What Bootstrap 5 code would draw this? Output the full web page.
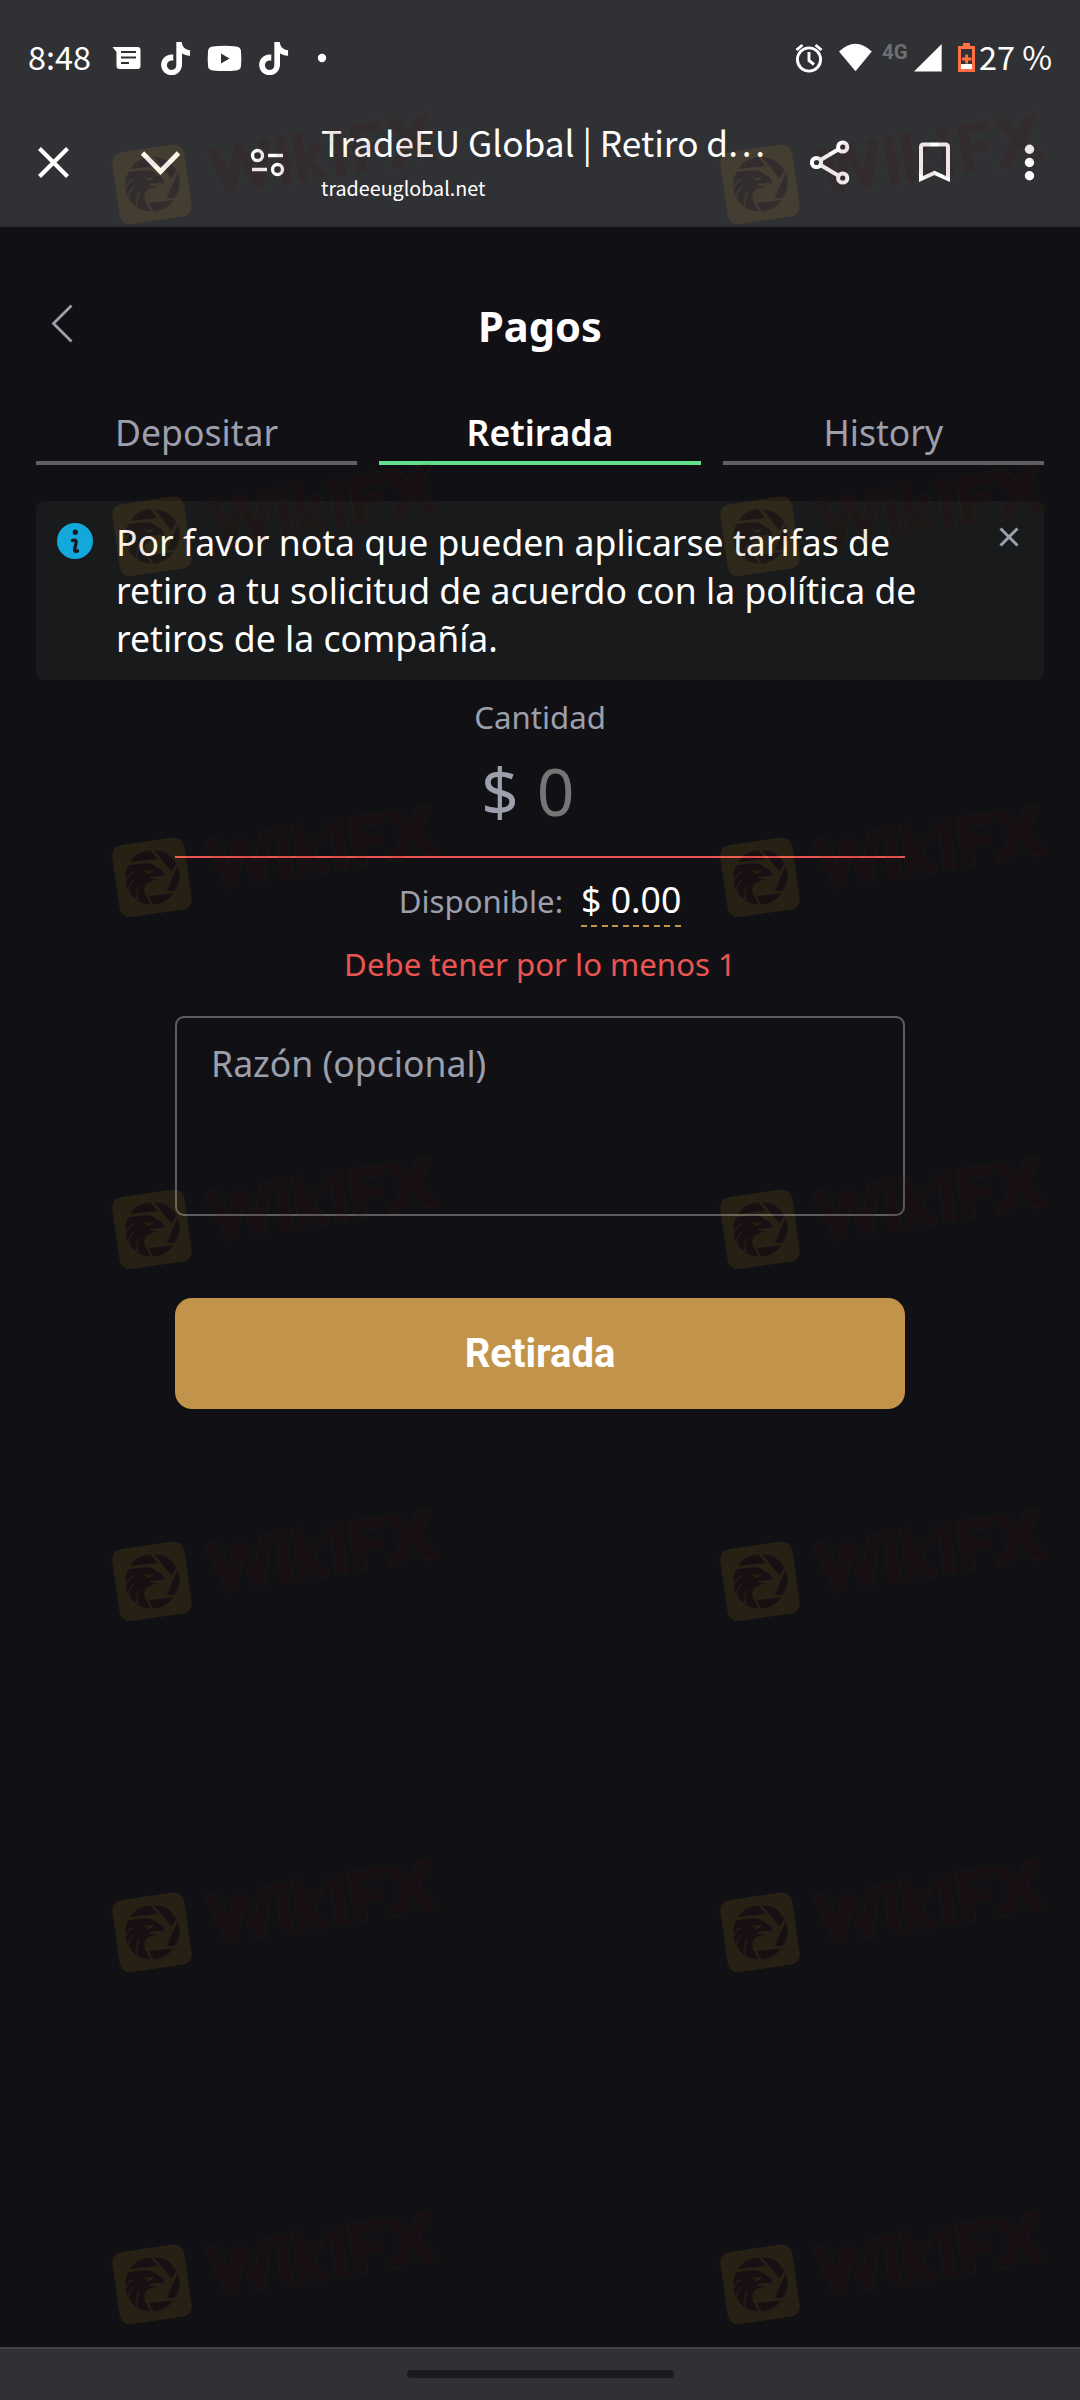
<!DOCTYPE html>
<html lang="es">
<head>
<meta charset="utf-8">
<meta name="viewport" content="width=device-width, initial-scale=1">
<title>TradeEU Global | Retiro de fondos</title>
<link href="https://cdn.jsdelivr.net/npm/bootstrap@5.3.0/dist/css/bootstrap.min.css" rel="stylesheet">
<style>
  body { background: #111115; color: #fff; font-family: "Noto Sans", sans-serif; font-size: 35.6px; line-height: 48px; width: 1080px; height: 2400px; overflow: hidden; }
  svg { display: block; flex: none; }
  .sys-font { font-family: "Noto Sans CJK JP", "Noto Sans", sans-serif; }
  .chrome-head { background: #303134; height: 227px; border-bottom: 2px solid #2d2e32; }
  .status-row { height: 100px; padding: 16px 29px 0 28px; }
  .clock-text { width: 82px; font-size: 32.4px; line-height: 40px; padding-bottom: 5px; }
  .net-text { font: 700 20.5px/24px Roboto, sans-serif; color: #6e6f71; width: 31px; padding-bottom: 12px; }
  .pct-text { font-size: 32.4px; line-height: 40px; width: 72px; padding-bottom: 5px; }
  .tool-row { height: 125px; padding: 0 24px 0 28px; }
  .page-title { width: 460px; margin-left: 31px; margin-top: -3px; }
  .title-line { font-size: 35.2px; line-height: 44px; }
  .title-line span { letter-spacing: 3.8px; }
  .url-line { font-size: 19.7px; line-height: 30px; margin-top: 9px; }
  .muted-text { color: #9c9fac; }
  .head-row { padding-top: 69px; height: 173px; }
  .back-btn { margin-left: 49px; width: 30px; margin-top: 5px; }
  .head-row h1 { font-size: 41.6px; line-height: 60px; font-weight: 700; }
  .pay-tabs { gap: 22px; padding: 0 36px; }
  .pay-tabs .nav-link { padding: 8px 0 5px; border-radius: 0; border-bottom: 4px solid #5f5f63; color: #9c9fac; line-height: 48px; }
  .pay-tabs .nav-link.active { background: none; border-bottom-color: #62e08c; color: #fff; font-weight: 600; }
  .note-box { margin: 36px 36px 0; height: 179px; border-radius: 8px; background: #191a1b; border: 0; padding: 18px 25px 0 20px; color: #fff; }
  .note-copy { margin-left: 22px; margin-top: -1px; }
  .pay-form { width: 730px; }
  .f32 { font-size: 31.2px; line-height: 44px; }
  .amount-row { height: 119px; padding-top: 6px; border-bottom: 2px solid #eb5551; padding-left: 306px; font-size: 66px; line-height: 90px; }
  .amount-row .zero-text { color: #757575; margin-left: 18px; }
  .avail-sum { background: repeating-linear-gradient(90deg, #c4954a 0 6px, transparent 6px 10.4px) bottom / 100% 2px no-repeat; line-height: 52px; padding-bottom: 2px; }
  .err-text { color: #eb5551; }
  .reason-box { height: 200px; background: transparent !important; border: 2px solid #5d5d60; border-radius: 9px; padding: 21px 34px; font-size: 35.6px; line-height: 48px; resize: none; color: #fff; }
  .reason-box::placeholder { color: #9c9fac; opacity: 1; }
  .btn-gold { height: 111px; border: 0; border-radius: 17px; background: #c2934a; color: #fff; font: 700 40px/48px Roboto, sans-serif; }
  .gesture-bar { height: 53px; background: #303134; border-top: 2px solid #424248; }
  .gesture-pill { width: 267px; height: 8px; border-radius: 4px; background: #1b1b1d; margin-top: 21px; }
  .wm-layer { position: absolute; left: 0; top: 0; pointer-events: none; }
</style>
</head>
<body class="d-flex flex-column position-relative">

<header class="chrome-head sys-font">
  <div class="status-row d-flex align-items-center">
    <span class="clock-text">8:48</span>
    <svg width="34" height="34" viewBox="110 41 34 34"><path fill="#fff" fill-rule="evenodd" d="M112.5 47h25a3 3 0 0 1 3 3v16a3 3 0 0 1-3 3h-18a3 3 0 0 1-3-3V52zM121 51v2h15v-2zM121 56.5v2h15v-2zM121 62v2h8v-2z"/></svg>
    <svg style="margin-left:14px" width="34" height="34" viewBox="158 41 34 34"><g id="tk" transform="translate(159,42) scale(1.385)"><path fill="#fff" d="M12.525.02c1.31-.02 2.61-.01 3.91-.02.08 1.53.63 3.09 1.75 4.17 1.12 1.11 2.7 1.62 4.24 1.79v4.03c-1.44-.05-2.89-.35-4.2-.97-.57-.26-1.1-.59-1.62-.93-.01 2.92.01 5.84-.02 8.75-.08 1.4-.54 2.79-1.35 3.94-1.31 1.92-3.58 3.17-5.91 3.21-1.43.08-2.86-.31-4.08-1.03-2.02-1.19-3.44-3.37-3.65-5.71-.02-.5-.03-1-.01-1.49.18-1.9 1.12-3.72 2.58-4.96 1.66-1.44 3.98-2.13 6.15-1.72.02 1.48-.04 2.96-.04 4.44-.99-.32-2.15-.23-3.02.37-.63.41-1.11 1.04-1.36 1.75-.21.51-.15 1.07-.14 1.61.24 1.64 1.82 3.02 3.5 2.87 1.12-.01 2.19-.66 2.77-1.61.19-.33.4-.67.41-1.06.1-1.79.06-3.57.07-5.36.01-4.03-.01-8.05.02-12.07z"/></g></svg>
    <svg style="margin-left:15px" width="36" height="34" viewBox="207 41 36 34"><path fill="#fff" fill-rule="evenodd" d="M213 46.500q11.500-1.500 23 0 5 .5 5 5 .6 7 0 14 0 4.500-5 5-11.500 1-23 0-5-.5-5-5-.6-7 0-14 0-4.500 5-5zM221 53.500v10l8.500-5z"/></svg>
    <svg style="margin-left:13px" width="34" height="34" viewBox="158 41 34 34"><use href="#tk"/></svg>
    <svg style="margin-left:26px" width="12" height="34" viewBox="316 41 12 34"><circle cx="322" cy="58" r="4.200" fill="#fff"/></svg>
    <div class="d-flex align-items-center ms-auto">
      <svg width="34" height="34" viewBox="792 41 34 34" fill="none" stroke="#fff"><circle cx="809" cy="59.500" r="11.600" stroke-width="2.900"/><path stroke-width="2.900" d="M809 52v8.500l5 4M796.500 50l6-5M821.500 50l-6-5"/></svg>
      <svg class="ms-2" width="40" height="34" viewBox="834 41 40 34"><path fill="#fff" d="M839 51.600Q855.500 36 871.800 51.600L855.500 71.200z"/></svg>
      <span class="net-text ms-2">4G</span>
      <svg width="30" height="34" viewBox="913 41 30 34"><path fill="#fff" d="M914 71.500L941.700 44v27.500z"/></svg>
      <svg style="margin-left:13px" width="23" height="34" viewBox="956 41 23 34"><path fill="#ff7043" fill-rule="evenodd" d="M963 43h7v3h5v26h-17V46h5zM961 49v15h11V49z"/><path fill="#fff" d="M961 64h11v5h-11z"/><path stroke="#ff7043" stroke-width="2.800" d="M962 59h9.500M966.700 54.500v9"/></svg>
      <span class="pct-text text-nowrap">27 %</span>
    </div>
  </div>
  <div class="tool-row d-flex align-items-center">
    <svg width="50" height="49" viewBox="28 138 50 49" fill="none" stroke="#fff" stroke-width="4.200"><path d="M39.500 148.500l28 28M67.500 148.500l-28 28"/></svg>
    <svg style="margin-left:57px" width="50" height="49" viewBox="135 138 50 49" fill="none" stroke="#fff" stroke-width="4.800"><path d="M142.500 153l18 18.500 18-18.500"/></svg>
    <svg style="margin-left:57px" width="48" height="49" viewBox="242 138 48 49" fill="none" stroke="#fff" stroke-width="3.300"><circle cx="257.500" cy="155.500" r="5"/><circle cx="277.500" cy="169.500" r="5"/><path d="M268 155.500h15M252 169.500h15"/></svg>
    <div class="page-title">
      <div class="title-line text-nowrap">TradeEU Global | Retiro d<span>...</span></div>
      <div class="url-line">tradeeuglobal.net</div>
    </div>
    <svg style="margin-left:23px" width="52" height="49" viewBox="804 138 52 49" fill="none" stroke="#fff" stroke-width="4"><circle cx="842.700" cy="147" r="4.600"/><circle cx="842.700" cy="178" r="4.600"/><circle cx="816.500" cy="162.500" r="4.600"/><path d="M820.500 160l18.500-11M820.500 165l18.500 11"/></svg>
    <svg style="margin-left:52px" width="52" height="49" viewBox="908 138 52 49" fill="none" stroke="#fff" stroke-width="4"><path d="M921 179V147q0-2.500 2.500-2.500h22q2.500 0 2.500 2.500v32l-13.500-6z"/></svg>
    <svg class="ms-auto" width="52" height="49" viewBox="1004 138 52 49" fill="#fff"><circle cx="1029.500" cy="149.300" r="4.700"/><circle cx="1029.500" cy="162.500" r="4.700"/><circle cx="1029.500" cy="175.700" r="4.700"/></svg>
  </div>
</header>

<main class="flex-grow-1">
  <div class="head-row d-flex">
    <a class="back-btn" href="#" aria-label="Volver"><svg width="30" height="44" viewBox="50 300 30 44" fill="none" stroke="#9c9fac" stroke-width="2.800"><path d="M72.500 304.500L54.500 322.500 72.500 340.500"/></svg></a>
    <h1 class="flex-grow-1 text-center mb-0" style="margin-right:79px">Pagos</h1>
  </div>
  <nav class="pay-tabs nav nav-pills nav-justified flex-nowrap">
    <a class="nav-link col" href="#">Depositar</a>
    <a class="nav-link col active" href="#">Retirada</a>
    <a class="nav-link col" href="#">History</a>
  </nav>
  <div class="note-box alert d-flex mb-0">
    <svg width="38" height="44" viewBox="56 519 38 44"><circle cx="75" cy="541" r="18" fill="#12a8dc"/><circle cx="75.300" cy="532.200" r="2.600" fill="#17191b"/><path fill="none" stroke="#17191b" stroke-width="3.400" stroke-linecap="round" d="M72.500 540.500q4.500-1.500 3.500 3l-1.200 5q-.8 4 2.700 2.500"/></svg>
    <div class="note-copy flex-grow-1">Por favor nota que pueden aplicarse tarifas de<br>retiro a tu solicitud de acuerdo con la política de<br>retiros de la compañía.</div>
    <svg width="20" height="36" viewBox="999 519 20 36" stroke="#9c9fac" stroke-width="3"><path d="M1000.500 528.500l17 17M1017.500 528.500l-17 17"/></svg>
  </div>
  <form class="pay-form mx-auto">
    <div class="f32 muted-text text-center" style="padding-top:15px">Cantidad</div>
    <div class="amount-row d-flex muted-text mb-0"><span>$</span><span class="zero-text">0</span></div>
    <div class="d-flex justify-content-center align-items-baseline" style="padding-top:15px">
      <span class="f32 muted-text">Disponible:</span><span class="avail-sum" style="margin-left:18px">$ 0.00</span>
    </div>
    <div class="err-text f32 text-center" style="margin-top:15px">Debe tener por lo menos 1</div>
    <textarea class="form-control reason-box" style="margin-top:30px" placeholder="Razón (opcional)"></textarea>
    <button type="button" class="btn btn-gold w-100 d-block" style="margin-top:82px">Retirada</button>
  </form>
</main>

<footer class="gesture-bar d-flex justify-content-center"><div class="gesture-pill"></div></footer>

<svg class="wm-layer" width="1080" height="2400" viewBox="0 0 1080 2400" aria-hidden="true">
  <defs>
    <g id="word">
      <g transform="translate(341,334) rotate(-9.200)" font-family="Lato, sans-serif" font-weight="400" font-size="185" stroke-linejoin="round" stroke-linecap="round"><text x="6" y="0" textLength="184" lengthAdjust="spacingAndGlyphs">W</text><text x="203" y="0">i</text><text x="257" y="0" textLength="84" lengthAdjust="spacingAndGlyphs">k</text><text x="368" y="0">i</text><text x="424" y="0">F</text><text x="548" y="0" textLength="128" lengthAdjust="spacingAndGlyphs">X</text></g>
    </g>
    <g id="wm" opacity=".1">
      <rect x="48" y="195" width="218" height="218" rx="30" fill="#f4b91f" transform="rotate(-8.200 157 304)"/>
      <g fill="#500800">
        <path d="M91 258A82 82 0 0 1 152 222L174 249z"/>
        <path d="M163 222A82 82 0 0 1 230 262L216 287z"/>
        <path d="M234 269A82 82 0 0 1 226 344L201 346z"/>
        <path d="M222 351A82 82 0 0 1 161 386L147 361z"/>
        <path d="M86 268L130 262Q163 260 173 277Q192 279 193 304L186 299L150 302Q147 311 181 310Q151 313 139 325Q127 340 140 362L154 386Q133 384 118 377A82 82 0 0 1 86 268z"/>
      </g>
      <path fill="none" stroke="#f4b91f" stroke-width="4" d="M134 283q13 7 24 1q-7 12-17 5M76 317q10-24 27-28M86 345q4-25 17-33M113 376q-5-28 6-48"/>
      <use href="#word" fill="#5a5a00" stroke="#5a5a00" stroke-width="23"/>
      <use href="#word" fill="#500800" stroke="#500800" stroke-width="17"/>
    </g>
    <g id="wmrow"><use href="#wm" transform="translate(99.600,0) scale(.33333)"/><use href="#wm" transform="translate(707.600,0) scale(.33333)"/></g>
  </defs>
  <use href="#wmrow" y="83"/><use href="#wmrow" y="435"/><use href="#wmrow" y="776"/><use href="#wmrow" y="1128"/><use href="#wmrow" y="1480"/><use href="#wmrow" y="1831"/><use href="#wmrow" y="2183"/>
</svg>
<script src="https://cdn.jsdelivr.net/npm/bootstrap@5.3.0/dist/js/bootstrap.bundle.min.js"></script>
</body>
</html>
